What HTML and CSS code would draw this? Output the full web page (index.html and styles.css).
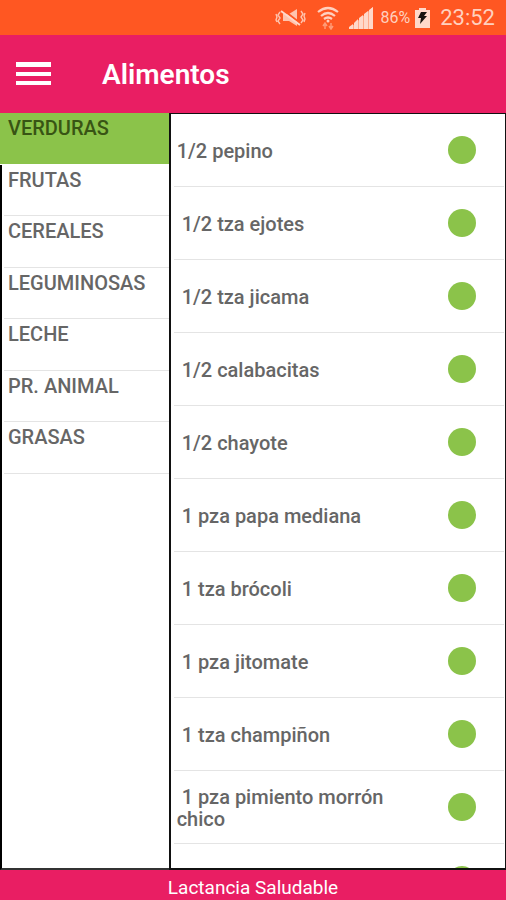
FILE: index.html
```html
<!DOCTYPE html>
<html lang="es">
<head>
<meta charset="utf-8">
<meta name="viewport" content="width=device-width, initial-scale=1">
<title>Alimentos</title>
<link rel="stylesheet" href="styles.css">
</head>
<body>
<div class="status">
  <svg class="mute" width="32" height="20" viewBox="0 0 32 20" aria-hidden="true">
    <path d="M8 6h6l8-5v17l-8-5H8z" fill="#ffc3ad"/>
    <path d="M7 1l18 14" stroke="#ff5722" stroke-width="2"/>
    <path d="M6 3l19 14" stroke="#ffd8ca" stroke-width="2"/>
    <path d="M5 4L3 7l2 3-2 3 2 3M1 6l1 3-1 3 1 2M26 3l2 3-2 3 2 3-2 3M30 5l-1 3 1 3-1 3" fill="none" stroke="#ffc3ad" stroke-width="1.4"/>
  </svg>
  <svg class="wifi" width="22" height="24" viewBox="0 0 22 24" aria-hidden="true">
    <path d="M1 6q10-8 20 0M4 10q7-6 14 0M7 13q4-3 8 0" fill="none" stroke="#ffd0bf" stroke-width="2.2"/>
    <circle cx="11" cy="15" r="1.5" fill="#ffd0bf"/>
    <path d="M8 23v-6m-2 3l2-3 2 3M14 17v6m-2-3l2 3 2-3" fill="none" stroke="#ff9b77" stroke-width="1.5"/>
  </svg>
  <svg class="signal" width="24" height="22" viewBox="0 0 24 22" aria-hidden="true">
    <path d="M0 22L24 0v22z" fill="#ffa98a"/>
    <path d="M0 22v-2l4-3v5zM5 22v-6l4-4v10zM10 22V11l4-3v14zM15 22V7l4-3v18zM20 22V3l4-3v22z" fill="#ffd8ca"/>
  </svg>
  <span class="percent">86%</span>
  <svg class="battery" width="15" height="20" viewBox="0 0 15 20" aria-hidden="true">
    <path d="M4 0h7v2h4v18H0V2h4z" fill="#ffd8ca"/>
    <path d="M6 4h6l-3 4h3l-7 8 1-6H3z" fill="#17120f"/>
  </svg>
  <span class="clock">23:52</span>
</div>
<header class="bar">
  <button class="menu" type="button" aria-label="Menú">
    <svg width="36" height="24" viewBox="0 0 36 24" aria-hidden="true">
      <path d="M0 0h35v5H0zM0 10h35v4H0zM0 19h35v4H0z" fill="#fff"/>
    </svg>
  </button>
  <h1>Alimentos</h1>
</header>
<main>
  <nav>
    <div class="groups">
      <button class="group active" type="button">VERDURAS</button>
      <button class="group" type="button">FRUTAS</button>
      <button class="group" type="button">CEREALES</button>
      <button class="group" type="button">LEGUMINOSAS</button>
      <button class="group" type="button">LECHE</button>
      <button class="group" type="button">PR. ANIMAL</button>
      <button class="group" type="button">GRASAS</button>
    </div>
  </nav>
  <ul class="foods">
    <li><span class="name">1/2 pepino</span><span class="dot"></span></li>
    <li><span class="name"> 1/2 tza ejotes</span><span class="dot"></span></li>
    <li><span class="name"> 1/2 tza jicama</span><span class="dot"></span></li>
    <li><span class="name"> 1/2 calabacitas</span><span class="dot"></span></li>
    <li><span class="name"> 1/2 chayote</span><span class="dot"></span></li>
    <li><span class="name"> 1 pza papa mediana</span><span class="dot"></span></li>
    <li><span class="name"> 1 tza brócoli</span><span class="dot"></span></li>
    <li><span class="name"> 1 pza jitomate</span><span class="dot"></span></li>
    <li><span class="name"> 1 tza champiñon</span><span class="dot"></span></li>
    <li><span class="name"> 1 pza pimiento morrón chico</span><span class="dot"></span></li>
    <li><span class="name"></span><span class="dot"></span></li>
  </ul>
</main>
<footer>Lactancia Saludable</footer>
</body>
</html>
```
FILE: styles.css
```css
* {
  box-sizing: border-box;
}

body {
  margin: 0;
  height: 100vh;
  display: flex;
  flex-direction: column;
  overflow: hidden;
  background: #fff;
  font-family: Roboto, "Liberation Sans", sans-serif;
  color: #666;
}

.status {
  flex: none;
  height: 35px;
  display: flex;
  align-items: center;
  justify-content: flex-end;
  padding-right: 11px;
  background: #ff5722;
  color: #ffd0bf;
}

.wifi {
  margin-left: 10px;
}

.signal {
  margin-left: 10px;
}

.percent {
  margin-left: 8px;
  font-size: 16px;
}

.battery {
  margin-left: 5px;
}

.clock {
  margin-left: 10px;
  font-size: 22px;
}

.bar {
  flex: none;
  height: 78px;
  display: flex;
  align-items: center;
  gap: 50px;
  padding-left: 16px;
  background: #e91e63;
  color: #fff;
}

.menu {
  display: flex;
  padding: 0;
  border: 0;
  background: none;
}

h1 {
  margin: 0;
  padding-top: 2px;
  font-size: 28px;
  line-height: 32px;
  font-weight: 600;
}

main {
  flex: 1;
  min-height: 0;
  display: grid;
  grid-template-columns: 1fr 2fr;
}

nav {
  border-left: 2px solid #000;
  border-bottom: 2px solid #333;
}

.groups {
  display: grid;
  grid-auto-rows: 1fr;
  height: 361px;
  margin-left: -2px;
}

.group {
  display: flex;
  align-items: flex-start;
  margin-left: 4px;
  padding: 4px;
  border: 0;
  border-bottom: 1px solid #e4e4e4;
  background: none;
  color: #666;
  font-family: inherit;
  font-size: 20px;
  line-height: 22px;
  font-weight: 500;
}

.group.active {
  margin-left: 0;
  padding-left: 8px;
  background: #8bc34a;
  background-clip: padding-box;
  border-color: #fff;
  color: #385414;
}

.foods {
  margin: 0;
  padding: 0 1px 0 3px;
  border: solid #111;
  border-width: 1px 1px 2px 2px;
  list-style: none;
  overflow: hidden;
}

.foods li {
  height: 73px;
  display: flex;
  align-items: center;
  justify-content: space-between;
  padding: 0 28px 0 3px;
  border-bottom: 1px solid #e4e4e4;
}

.name {
  width: 220px;
  padding-top: 2px;
  font-size: 20px;
  line-height: 22px;
  font-weight: 500;
  white-space: pre-wrap;
}

.dot {
  flex: none;
  width: 28px;
  height: 28px;
  border-radius: 50%;
  background: #8bc34a;
}

footer {
  flex: none;
  height: 30px;
  padding-top: 6px;
  background: #e91e63;
  color: #fff;
  font-size: 19px;
  line-height: 24px;
  text-align: center;
}
```
